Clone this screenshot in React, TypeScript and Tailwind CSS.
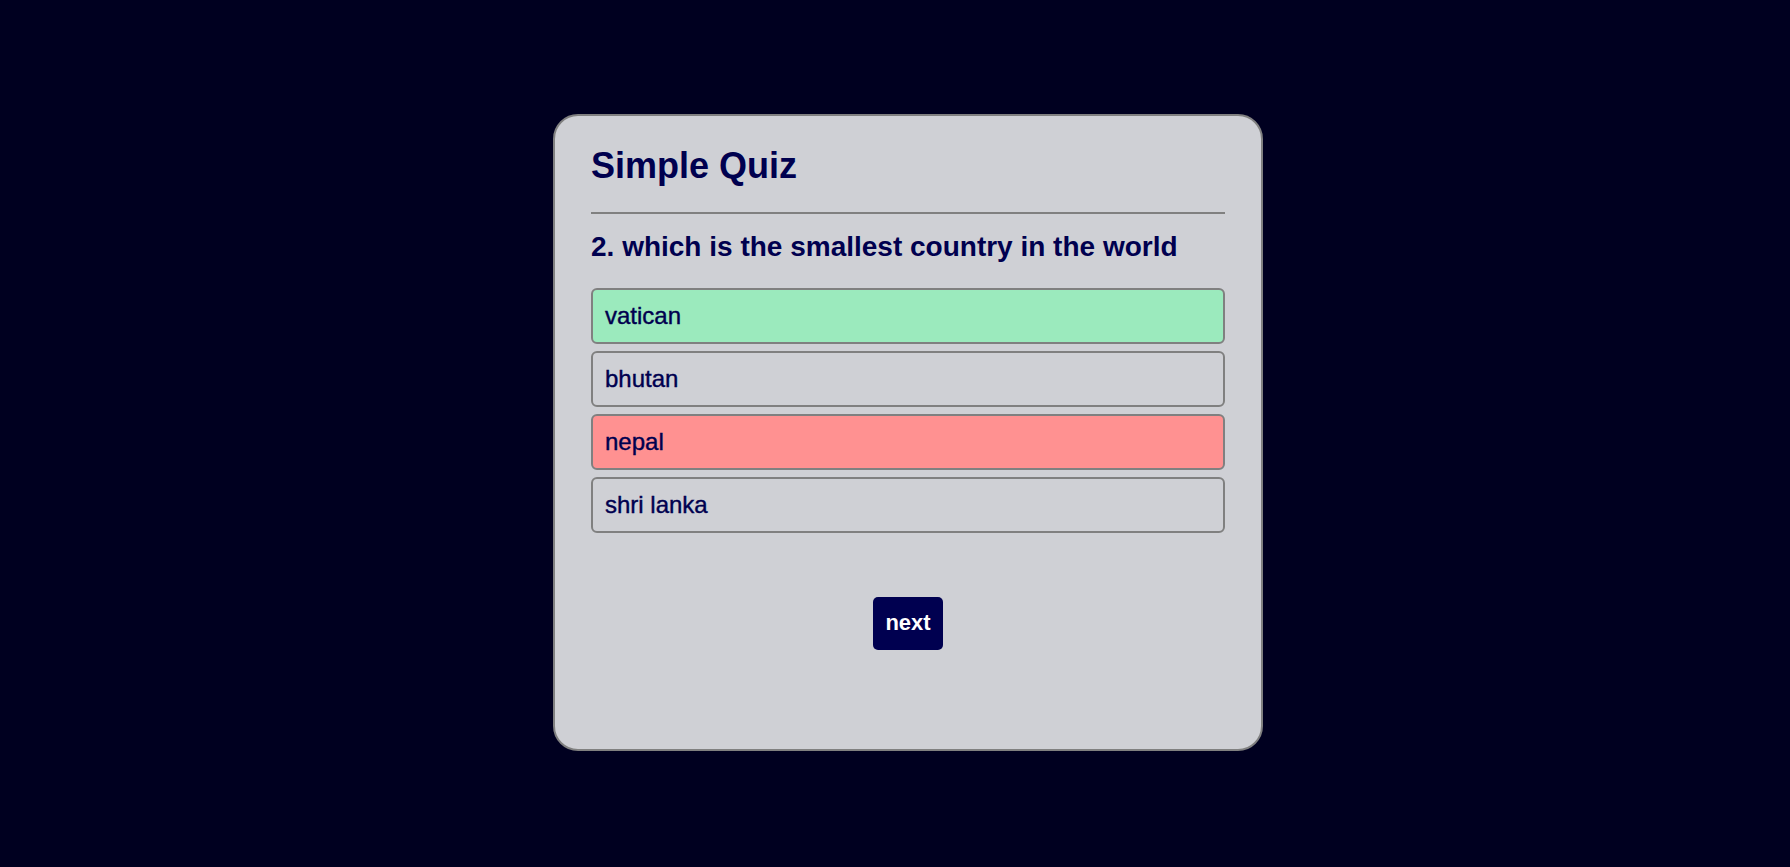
import React from "react";

const options = [
  { label: "vatican", cls: "bg-[#9beabd]" },
  { label: "bhutan", cls: "bg-transparent" },
  { label: "nepal", cls: "bg-[#ff9191]" },
  { label: "shri lanka", cls: "bg-transparent" },
];

export default function App() {
  return (
    <div
      className="min-h-[867px] w-full bg-[#000020] pt-[114px]"
      style={{ fontFamily: '"Liberation Sans", Arial, sans-serif' }}
    >
      <div className="ml-[553px] box-border flex h-[637px] w-[710px] flex-col rounded-[25px] border-2 border-[#808080] bg-[#cfd0d5] px-[36px] pt-[29px]">
        <h1 className="text-[36px] font-bold leading-[42px] text-[#00004f]">Simple Quiz</h1>
        <div className="mt-[25px] h-[2px] w-full bg-[#808080]" />
        <h2 className="mt-[17px] text-[28px] font-bold leading-[32px] text-[#00004f]">
          2. which is the smallest country in the world
        </h2>
        <div className="mt-[25px] flex flex-col gap-[7px]">
          {options.map((o) => (
            <div
              key={o.label}
              className={`box-border h-[56px] rounded-[6px] border-2 border-[#808080] pl-[12px] pt-[12px] text-[24px] leading-[28px] text-[#00004f] [-webkit-text-stroke:0.4px_#00004f] ${o.cls}`}
            >
              {o.label}
            </div>
          ))}
        </div>
        <div className="mt-[64px] flex justify-center">
          <button className="flex h-[53px] w-[70px] items-center justify-center rounded-[5px] bg-[#000050] pb-[3px] text-[22px] font-bold text-white">
            next
          </button>
        </div>
      </div>
    </div>
  );
}
